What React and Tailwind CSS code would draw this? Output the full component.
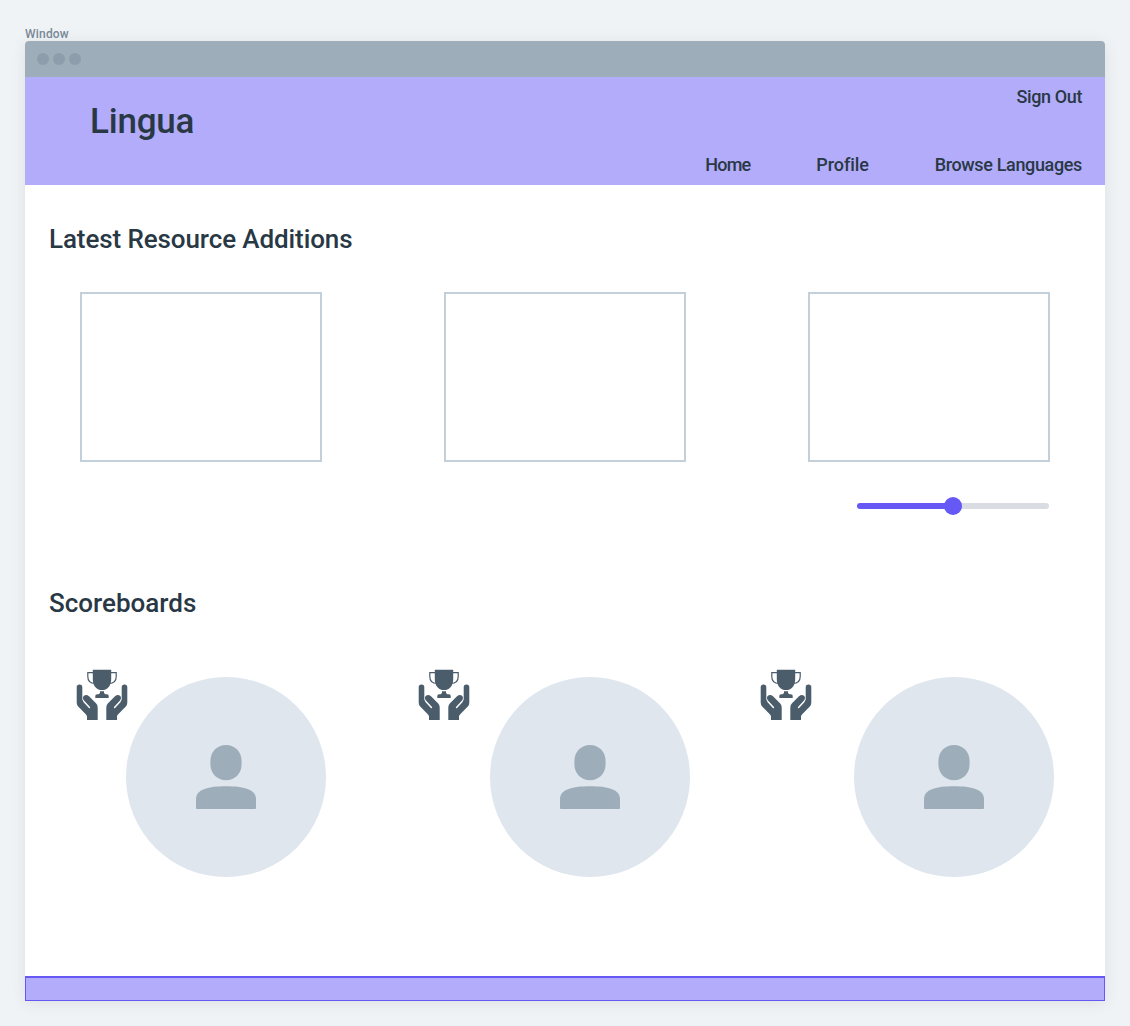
function Hand() {
  return (
    <path d="M0.7 18.4a2.8 2.8 0 0 1 5.6 0V30.6L7.6 33.2L12.9 38.9a.7.7 0 0 0 1.1-.9L8 31.4C5 28 9.3 24 13 27.3L20.2 34.5Q21.7 36 21.7 38.4V51H11V47L9.8 45.2L2.2 37.4Q.7 35.8.7 33.4Z" />
  );
}

function TrophyHands() {
  return (
    <svg className="h-[52px] w-[52px] shrink-0" viewBox="0 0 52 52" fill="#4b5c6b">
      <path d="M16.8 .8H35.2V10C35.2 15 33.2 18.8 29.5 20.5Q26 21.7 22.5 20.5C18.8 18.8 16.8 15 16.8 10Z" />
      <path d="M18 3.7H11.8V7.5C11.8 12 14.2 14.5 19 14.5M34 3.7H40.2V7.5C40.2 12 37.8 14.5 33 14.5" fill="none" stroke="#4b5c6b" strokeWidth="1.2" />
      <path d="M24 22.2H28V24L29.3 25.2H31Q32.7 25.2 32.7 27V29H19.3V27Q19.3 25.2 21 25.2H22.7L24 24Z" />
      <Hand />
      <g transform="translate(52 0) scale(-1 1)">
        <Hand />
      </g>
    </svg>
  );
}

function Avatar() {
  return (
    <div className="mt-2 flex h-[200px] w-[200px] shrink-0 items-center justify-center rounded-full bg-[#dfe6ee]">
      <svg className="h-16 w-[60px]" viewBox="0 0 60 64" fill="#9eadba">
        <path d="M30 0C39 0 45.6 6.8 45.6 16V19.2C45.6 28.4 39 35.2 30 35.2S14.4 28.4 14.4 19.2V16C14.4 6.8 21 0 30 0Z" />
        <path d="M0 54C0 44 13 41.2 30 41.2S60 44 60 54V63Q60 64 59 64H1Q0 64 0 63Z" />
      </svg>
    </div>
  );
}

export default function App() {
  return (
    <div className="h-[1026px] w-[1130px] overflow-hidden bg-[#eff3f6] px-[25px] pt-[26px] font-['Roboto',sans-serif] font-medium text-[#293845]">
      <div className="h-[15px] text-[12px] leading-[16px] tracking-[0.2px] text-[#788896]">Window</div>
      <div className="flex h-[960px] w-[1080px] flex-col rounded-t-[4px] bg-white shadow-[0_2px_16px_rgba(0,0,0,0.08)]">
        <div className="flex h-9 shrink-0 items-center gap-1 rounded-t-[4px] bg-[#9eadba] pl-3">
          <span className="h-3 w-3 rounded-full bg-[#8d9dab]" />
          <span className="h-3 w-3 rounded-full bg-[#8d9dab]" />
          <span className="h-3 w-3 rounded-full bg-[#8d9dab]" />
        </div>
        <header className="flex h-[108px] shrink-0 justify-between bg-[#b2acfa] pr-[23px] pl-[65px]">
          <h1 className="pt-[25px] text-[35px] leading-[40px] tracking-[-0.2px]">Lingua</h1>
          <div className="flex flex-col items-end justify-between pt-[10px] pb-[10px] text-[18px] leading-[20px]">
            <a className="tracking-[-0.4px]">Sign Out</a>
            <nav className="flex gap-[66px]">
              <a className="tracking-[-0.8px]">Home</a>
              <a className="tracking-[-0.1px]">Profile</a>
              <a className="tracking-[-0.35px]">Browse Languages</a>
            </nav>
          </div>
        </header>
        <main className="flex-1">
          <h2 className="mt-[38px] ml-6 text-[26px] leading-8 tracking-[-0.1px]">Latest Resource Additions</h2>
          <div className="mt-[37px] ml-[55px] flex gap-[122px]">
            <div className="h-[170px] w-[242px] border-2 border-[#c3cfd9]" />
            <div className="h-[170px] w-[242px] border-2 border-[#c3cfd9]" />
            <div className="h-[170px] w-[242px] border-2 border-[#c3cfd9]" />
          </div>
          <div className="mt-[35px] ml-[832px] flex h-[18px] w-48 items-center">
            <div className="-mr-px h-1.5 w-[88px] rounded-l-full bg-[#6558f5]" />
            <div className="z-10 h-[18px] w-[18px] rounded-full bg-[#6558f5]" />
            <div className="-ml-px h-1.5 flex-1 rounded-r-full bg-[#d9dde3]" />
          </div>
          <h2 className="mt-[72px] ml-6 text-[26px] leading-8">Scoreboards</h2>
          <div className="mt-[50px] ml-[51px] flex">
            <div className="flex w-[342px] -space-x-0.5"><TrophyHands /><Avatar /></div>
            <div className="flex w-[342px] justify-between pr-[70px]"><TrophyHands /><Avatar /></div>
            <div className="flex w-[294px] justify-between"><TrophyHands /><Avatar /></div>
          </div>
        </main>
        <footer className="h-[25px] shrink-0 border border-t-2 border-[#6558f5] bg-[#b2acfa]" />
      </div>
    </div>
  );
}
